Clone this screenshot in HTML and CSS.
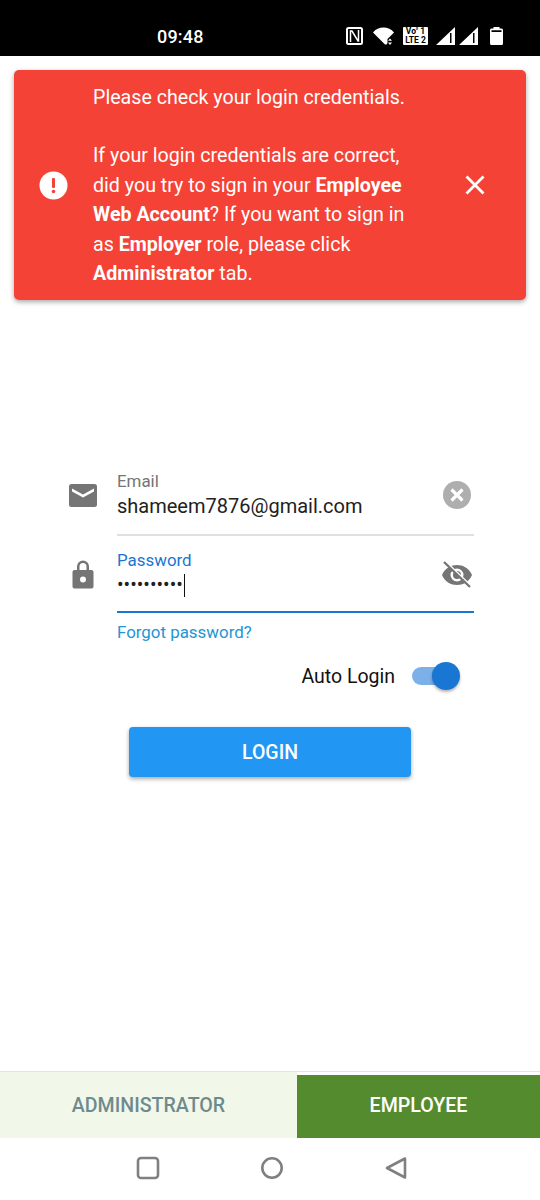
FILE: index.html
```html
<!DOCTYPE html>
<html lang="en">
<head>
<meta charset="utf-8">
<title>Login</title>
<link rel="stylesheet" href="styles.css">
</head>
<body>
<div class="app">
  <header class="status">
    <span class="clock">09:48</span>
    <div class="status-icons">
      <svg class="si nfc" width="17" height="18" viewBox="0 0 17 18"><rect x="1" y="1" width="15" height="16" rx="1.500" fill="none" stroke="#fff" stroke-width="2"/><path d="M4.500 15V4h1.500L12 14h.5V3" fill="none" stroke="#fff" stroke-width="1.500"/></svg>
      <svg class="si wifi" width="21" height="18" viewBox="0 0 21 18"><path fill="#fff" d="M0 5.500C5-1.200 16-1.200 21 5.500l-6.500 6.500V16l-1 1.500H12Z"/><path fill="#fff" d="M17 11.500l2 2.200h-4ZM17 18l-2-2.500h4Z"/></svg>
      <div class="volte"><span>Vo<sup>ll</sup> 1</span><span>LTE 2</span></div>
      <svg class="si sig1" width="19" height="18" viewBox="0 0 19 18"><path fill="#fff" fill-rule="evenodd" d="M0 18 19 0v18ZM14 6v10h1.500V6Z"/></svg>
      <svg class="si sig2" width="19" height="18" viewBox="0 0 19 18"><path fill="#fff" fill-rule="evenodd" d="M0 18 19 0v18ZM14 6v10h1.500V6Z"/></svg>
      <svg class="si batt" width="13" height="18" viewBox="0 0 13 18"><path fill="#fff" fill-rule="evenodd" d="M3.500 0h6v1.500h2A1.500 1.500 0 0 1 13 3v13.500a1.500 1.500 0 0 1-1.500 1.500h-10A1.500 1.500 0 0 1 0 16.500V3a1.500 1.500 0 0 1 1.500-1.500h2ZM1.500 3.200v1.800h10V3.200Z"/></svg>
    </div>
  </header>

  <main class="content">
    <div class="toast">
      <svg class="toast-alert" width="29" height="29" viewBox="0 0 29 29"><circle cx="14.500" cy="14.500" r="14" fill="#fff"/><rect x="13" y="7" width="3" height="10" rx="1" fill="#f44336"/><circle cx="14.500" cy="20.500" r="1.800" fill="#f44336"/></svg>
      <p class="toast-text">Please check your login credentials.<br><br>If your login credentials are correct, did you try to sign in your <b>Employee Web Account</b>? If you want to sign in as <b>Employer</b> role, please click <b>Administrator</b> tab.</p>
      <svg class="toast-close" width="20" height="20" viewBox="0 0 20 20"><path d="M1.500 1.500l17 17M18.500 1.500l-17 17" stroke="#fff" stroke-width="2.800" fill="none"/></svg>
    </div>

    <form class="form">
      <div class="field">
        <svg class="lead" width="28" height="23" viewBox="0 0 28 23"><path fill="#757575" fill-rule="evenodd" d="M2.500 0h23A2.500 2.500 0 0 1 28 2.500v18a2.500 2.500 0 0 1-2.500 2.500h-23A2.500 2.500 0 0 1 0 20.500v-18A2.500 2.500 0 0 1 2.500 0Zm.5 4.500v3L14 13.500l11-6v-3L14 10.500Z"/></svg>
        <div class="input idle">
          <span class="label">Email</span>
          <span class="value">shameem7876@gmail.com</span>
          <svg class="trail" width="28" height="28" viewBox="0 0 28 28"><circle cx="14" cy="14" r="14" fill="#aeaeae"/><path d="M8.500 8.500l11 11M19.500 8.500l-11 11" stroke="#fff" stroke-width="3.200" fill="none"/></svg>
        </div>
      </div>
      <div class="field pass">
        <svg class="lead" width="22" height="30" viewBox="0 0 22 30"><path fill="#757575" fill-rule="evenodd" d="M5 11V7.500a6 6 0 0 1 12 0V11h2.500A2 2 0 0 1 21.500 13v14.500a2 2 0 0 1-2 2h-17a2 2 0 0 1-2-2V13a2 2 0 0 1 2-2Zm2.500 0h7V7.500a3.500 3.500 0 0 0-7 0ZM11 17.500a3 3 0 1 0 0 6 3 3 0 0 0 0-6Z"/></svg>
        <div class="input active">
          <span class="label">Password</span>
          <span class="value dots">••••••••••<i class="caret"></i></span>
          <svg class="trail eye" width="32" height="28" viewBox="0 0 32 28"><path fill="#757575" fill-rule="evenodd" d="M1 14C4 7 10 4 16 4s12 3 15 10c-3 7-9 10-15 10S4 21 1 14Zm15-6.500a6.500 6.500 0 1 0 0 13 6.500 6.500 0 0 0 0-13Z"/><circle cx="16" cy="14" r="4" fill="#757575"/><path d="M5 1l26 25" stroke="#fff" stroke-width="2"/><path d="M3 1l26 25" stroke="#757575" stroke-width="2.400"/></svg>
        </div>
      </div>
      <a class="forgot">Forgot password?</a>
      <div class="auto">
        <span>Auto Login</span>
        <div class="switch"><i class="track"></i><i class="thumb"></i></div>
      </div>
      <button class="login" type="button">LOGIN</button>
    </form>
  </main>

  <nav class="tabs">
    <div class="tab admin">ADMINISTRATOR</div>
    <div class="tab emp">EMPLOYEE</div>
  </nav>

  <footer class="sysnav">
    <svg width="24" height="24" viewBox="0 0 24 24"><rect x="2" y="2" width="20" height="20" rx="3" fill="none" stroke="#808080" stroke-width="2.600"/></svg>
    <svg width="24" height="24" viewBox="0 0 24 24"><circle cx="12" cy="12" r="9.700" fill="none" stroke="#808080" stroke-width="2.600"/></svg>
    <svg width="24" height="24" viewBox="0 0 24 24"><path d="M21 2.500v19L3 12Z" fill="none" stroke="#808080" stroke-width="2.600" stroke-linejoin="round"/></svg>
  </footer>
</div>
</body>
</html>
```
FILE: styles.css
```css
* { box-sizing: border-box; }
html, body { margin: 0; padding: 0; }
body { font-family: Roboto, "Liberation Sans", sans-serif; background: #fff; }
.app { width: 540px; height: 1200px; display: flex; flex-direction: column; overflow: hidden; }

.status { height: 56px; flex: none; background: #000; color: #fff; display: flex; align-items: center; padding: 16px 37px 0 157px; justify-content: space-between; }
.clock { font-size: 18px; font-weight: 500; letter-spacing: .2px; }
.status-icons { display: flex; align-items: center; margin-top: -1px; }
.si { display: block; flex: none; }
.wifi { margin-left: 10px; }
.sig1 { margin-left: 8px; }
.sig2 { margin-left: 4px; }
.batt { margin-left: 12px; }
.volte { width: 25px; height: 18px; margin-left: 9px; background: #fff; color: #000; border-radius: 1px; display: flex; flex-direction: column; align-items: center; justify-content: center; font-size: 8.500px; line-height: 8.500px; font-weight: 700; white-space: nowrap; }
.volte sup { font-size: 4px; line-height: 0; }

.content { flex: 1; position: relative; }
.toast { position: absolute; left: 14px; right: 14px; top: 14px; height: 230px; background: #f44336; border-radius: 5px; box-shadow: 0 2px 5px rgba(0,0,0,.35); display: flex; align-items: center; color: #fff; }
.toast-alert { flex: none; margin-left: 25px; }
.toast-text { margin: 1px 0 0 25px; width: 330px; flex: none; font-size: 19.650px; line-height: 29.400px; }
.toast-text b { font-weight: 700; }
.toast-close { flex: none; margin-left: 42px; }

.form { display: flex; flex-direction: column; padding: 409px 66px 0 68px; }
.field { display: flex; align-items: center; height: 71px; }
.field .lead { flex: none; margin: -10px 20px 0 1px; }
.pass { height: 69px; margin-top: 8px; }
.field.pass .lead { margin: -10px 23px 0 4px; }
.input { position: relative; flex: 1; height: 100%; padding-top: 6px; display: flex; flex-direction: column; }
.idle { border-bottom: 2px solid #e0e0e0; }
.active { border-bottom: 2px solid #1976d2; }
.label { font-size: 16.900px; line-height: 20px; color: #757575; }
.active .label { color: #1976d2; }
.value { font-size: 20px; line-height: 30px; color: #212121; white-space: nowrap; }
.dots { font-size: 19.500px; display: flex; align-items: center; height: 30px; }
.caret { display: block; width: 1.500px; height: 23px; background: #111; margin-left: 1px; }
.trail { position: absolute; right: 3px; top: 16px; }
.eye { right: 1px; top: 17px; }
.forgot { margin: 9px 0 0 49px; font-size: 16.900px; line-height: 20px; color: #2196d3; }
.auto { display: flex; align-items: center; justify-content: flex-end; margin-top: 19px; height: 30px; font-size: 19.500px; color: #111; padding-right: 14px; gap: 17px; }
.switch { position: relative; width: 48px; height: 30px; flex: none; }
.track { position: absolute; left: 0; top: 6px; width: 44px; height: 18px; border-radius: 9px; background: #7cb0e8; }
.thumb { position: absolute; right: 0; top: 1px; width: 28px; height: 28px; border-radius: 50%; background: #1976d2; box-shadow: 0 2px 3px rgba(0,0,0,.3); }
.login { align-self: center; margin: 36px 2px 0 0; width: 282px; height: 50px; border: 0; border-radius: 4px; background: #2196f3; color: #fff; font: 500 19.500px Roboto, sans-serif; box-shadow: 0 2px 4px rgba(0,0,0,.35); }

.tabs { flex: none; height: 67px; display: flex; border-top: 1px solid #e4e4e4; }
.tab { display: flex; align-items: center; justify-content: center; font-size: 19.600px; font-weight: 500; padding-top: 1px; }
.admin { width: 297px; background: #f1f8e9; color: #6f8a8f; }
.emp { flex: 1; background: #558b2f; color: #fff; margin-top: 3px; padding: 0 0 2px; }

.sysnav { flex: none; height: 62px; display: flex; align-items: center; padding: 0 0 2px 135.500px; gap: 100px; }
.sysnav svg { display: block; }
```
